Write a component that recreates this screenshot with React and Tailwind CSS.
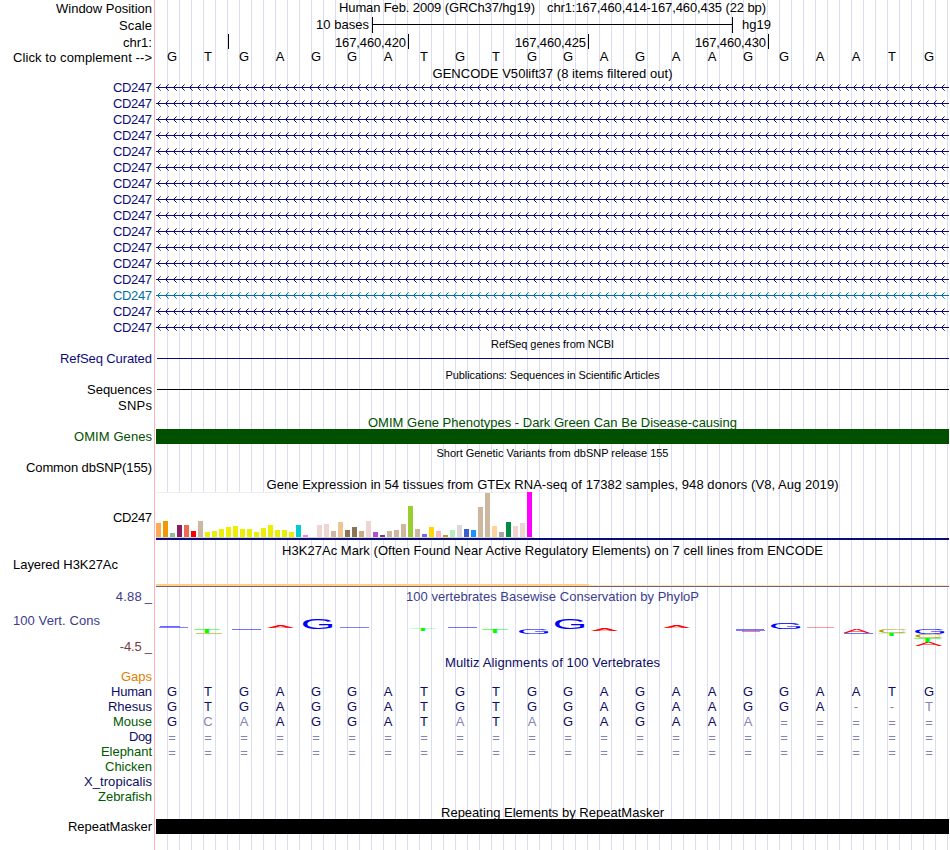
import { useLayoutEffect, useRef, useState } from "react";

const SEQ = "GTGAGGATGTGGAGAAGGAATG";

const TISSUES = [
  ["#ffaa56", 14], ["#ee9a00", 16], ["#8fbc8f", 4], ["#8b1c62", 12], ["#ee6a50", 12], ["#ff0000", 6],
  ["#cdb79e", 16], ["#eeee00", 5], ["#eeee00", 6], ["#eeee00", 8], ["#eeee00", 10], ["#eeee00", 11],
  ["#eeee00", 8], ["#eeee00", 8], ["#eeee00", 5], ["#eeee00", 9], ["#eeee00", 12], ["#eeee00", 7],
  ["#eeee00", 7], ["#eeee00", 5], ["#00cdcd", 12], ["#ee82ee", 2], ["#9ac0cd", 0], ["#eed5d2", 12],
  ["#eed5d2", 13], ["#cdb79e", 6], ["#eec591", 15], ["#8b7355", 7], ["#8b7355", 10], ["#cdaa7d", 6],
  ["#eed5d2", 16], ["#b452cd", 5], ["#7a378b", 2], ["#cdb79e", 6], ["#cdb79e", 7], ["#cdb79e", 13],
  ["#9acd32", 31], ["#cdb79e", 8], ["#7a67ee", 3], ["#ffd700", 10], ["#ffb6c1", 6], ["#cd9b1d", 2],
  ["#b4eeb4", 7], ["#d9d9d9", 12], ["#3a5fcd", 8], ["#1e90ff", 7], ["#cdb79e", 30], ["#cdb79e", 44],
  ["#ffd39b", 11], ["#a6a6a6", 5], ["#008b45", 15], ["#eed5d2", 11], ["#eed5d2", 14], ["#ff00ff", 45],
];

// Conservation logo glyphs: letter, left, right, top, bottom
const LOGO = [
  ["T", 194, 220, 629, 633],
  ["A", 267, 294, 625, 628], ["G", 303, 333, 619, 629],
  ["T", 410, 436, 629, 631], ["T", 482, 508, 629, 633],
  ["G", 519, 549, 629, 634], ["G", 555, 585, 619, 629], ["A", 591, 618, 629, 631],
  ["A", 663, 690, 625, 628], ["G", 771, 801, 622, 629],
  ["A", 843, 870, 629, 633], ["C", 879, 907, 629, 633], ["T", 878, 905, 633, 636],
  ["G", 915, 945, 629, 634], ["C", 915.5, 943, 634, 638], ["T", 914, 941, 638, 642], ["A", 915, 942, 642, 646],
];
// Scores close to zero collapse to hairlines: letter, left, right, top, opacity
const HAIRLINES = [
  ["G", 160, 180, 626, 0.6], ["G", 159, 188, 627, 0.5],
  ["G", 736, 764, 629, 0.55], ["G", 736, 765, 630, 0.5],
  ["C", 196, 222, 633, 0.6], ["G", 232, 261, 629, 0.55], ["G", 340, 369, 627, 0.5], ["G", 448, 477, 627, 0.55],
  ["A", 742, 760, 631, 0.5], ["A", 807, 834, 627, 0.4], ["G", 844, 873, 633, 0.55],
];
const BASE_FILL = { G: "#0000ff", A: "#ff0000", T: "#00ff00", C: "#b4a000" };
const INK = { G: [5, 72.5], A: [0.3, 66.4], T: [2, 59], C: [5, 69] };

const SPECIES = [
  ["Human", 41, "text-[#0c0c64]", SEQ],
  ["Rhesus", 44, "text-[#0c0c64]", "GTGAGGATGTGGAGAAGGA--t"],
  ["Mouse", 39, "text-[#005a00]", "GcaAGGATaTaGAGAAa====="],
  ["Dog", 23, "text-[#0c0c64]", "======================"],
  ["Elephant", 51, "text-[#005a00]", "======================"],
  ["Chicken", 47, "text-[#005a00]", ""],
  ["X_tropicalis", 68, "text-[#0c0c64]", ""],
  ["Zebrafish", 54, "text-[#005a00]", ""],
];

// Text tracked out or in so that it fills the given width
function Fit({ w, className = "", children }) {
  const ref = useRef(null);
  const [ls, setLs] = useState(0);
  useLayoutEffect(() => {
    const el = ref.current;
    el.style.letterSpacing = "0px";
    el.style.marginRight = "0px";
    const next = (w - el.getBoundingClientRect().width) / Math.max(1, children.length - 1);
    el.style.letterSpacing = next + "px";
    el.style.marginRight = -next + "px";
    setLs(next);
  }, [w, children]);
  return (
    <span ref={ref} className={`inline-block whitespace-pre ${className}`} style={{ letterSpacing: ls, marginRight: -ls }}>
      {children}
    </span>
  );
}

function Row({ h, label, w, labelClass = "", children }) {
  return (
    <div className={`flex shrink-0 ${h}`}>
      <div className={`flex w-[152px] shrink-0 items-start justify-end ${labelClass}`}>
        {label && <Fit w={w}>{label}</Fit>}
      </div>
      <div className="ml-1 w-[793px] shrink-0">{children}</div>
    </div>
  );
}

function Title({ h, w, className = "", children }) {
  return (
    <Row h={h}>
      <div className={`flex justify-center ${className}`}>
        <Fit w={w}>{children}</Fit>
      </div>
    </Row>
  );
}

function Intron({ color }) {
  const tips = Array.from({ length: 99 }, (_, i) => 1 + i * 8);
  return (
    <svg width="793" height="16" className="block" shapeRendering="crispEdges" fill={color}>
      <rect x="0" y="7" width="793" height="1" />
      {tips.map((x) => (
        <g key={x}>
          <rect x={x + 1} y="6" width="1" height="3" />
          <rect x={x + 2} y="5" width="1" height="1" />
          <rect x={x + 2} y="9" width="1" height="1" />
          <rect x={x + 3} y="4" width="1" height="1" opacity="0.6" />
          <rect x={x + 3} y="10" width="1" height="1" opacity="0.6" />
        </g>
      ))}
    </svg>
  );
}

function Bases({ seq, className = "" }) {
  return (
    <div className={`-ml-[2px] flex ${className}`}>
      {seq.split("").map((c, i) => {
        const pale = c === "=" || c === "-" || c !== c.toUpperCase();
        return (
          <span
            key={i}
            className={`w-9 shrink-0 text-center ${pale ? "text-[#8484b4]" : ""} ${c === "=" ? "pt-px" : ""} ${i === 21 ? "pl-[2px]" : ""}`}
          >
            {c.toUpperCase()}
          </span>
        );
      })}
    </div>
  );
}

function Logo() {
  return (
    <svg width="793" height="32" viewBox="156 617 793 32" className="block" fontFamily="Liberation Sans, Arial, sans-serif" fontSize="100">
      {HAIRLINES.map(([c, x0, x1, y, o], i) => (
        <rect key={i} x={x0} y={y} width={x1 - x0} height="1" fill={BASE_FILL[c]} opacity={o} />
      ))}
      {LOGO.map(([c, x0, x1, y0, y1], i) => {
        const [a, b] = INK[c];
        const sx = (x1 - x0) / (b - a);
        const round = c === "G" || c === "C";
        const sy = (y1 - y0) / (round ? 71 : 69);
        return (
          <text key={i} fill={BASE_FILL[c]} transform={`translate(${x0 - a * sx} ${y1 - (round ? sy : 0)}) scale(${sx} ${sy})`}>
            {c}
          </text>
        );
      })}
    </svg>
  );
}

function Position({ first, children }) {
  return (
    <div className={`flex h-[15px] justify-end border-r border-black ${first ? "w-[73px]" : "w-[180px]"}`}>
      {children && <Fit w={71} className="mt-px">{children}</Fit>}
      {children && <span className="w-[2px] shrink-0" />}
    </div>
  );
}

export default function App() {
  return (
    <div className="flex h-[850px] w-[950px] overflow-hidden bg-white font-['Liberation_Sans',Arial,sans-serif] text-[13px] leading-[15px] text-black">
      <div className="flex w-[950px] flex-col bg-[linear-gradient(to_right,transparent_154px,#ffb0b0_154px,#ffb0b0_155px,transparent_155px),repeating-linear-gradient(to_right,transparent_0px,transparent_11px,#dcdcf5_11px,#dcdcf5_12px)] bg-[length:950px_850px,793px_850px] bg-[position:0_0,156px_0] bg-no-repeat">
        <Row h="h-[17px]" label="Window Position" w={96} labelClass="pt-px">
          <div className="flex justify-center gap-3">
            <Fit w={196}>Human Feb. 2009 (GRCh37/hg19)</Fit>
            <Fit w={219}>chr1:167,460,414-167,460,435 (22 bp)</Fit>
          </div>
        </Row>
        <Row h="h-4" label="Scale" w={33} labelClass="pt-px">
          <div className="flex">
            <div className="flex w-[216px] justify-end pr-[3px]">
              <Fit w={53}>10 bases</Fit>
            </div>
            <div className="h-4 w-[361px] border-x border-black">
              <div className="mt-[7px] h-px bg-black" />
            </div>
            <div className="pl-[9px]">
              <Fit w={29}>hg19</Fit>
            </div>
          </div>
        </Row>
        <Row h="h-4" label="chr1:" w={29} labelClass="pt-[2px]">
          <div className="flex pt-px">
            <Position first />
            <Position>167,460,420</Position>
            <Position>167,460,425</Position>
            <Position>167,460,430</Position>
          </div>
        </Row>
        <Row h="h-4" label="Click to complement -->" w={139} labelClass="pt-px">
          <Bases seq={SEQ} />
        </Row>
        <Title h="h-[15px]" w={240} className="pt-px">GENCODE V50lift37 (8 items filtered out)</Title>
        {Array.from({ length: 16 }, (_, i) => (
          <Row key={i} h="h-4" label="CD247" w={39} labelClass={i === 13 ? "text-[#006fa6]" : "text-[#0c0c78]"}>
            <Intron color={i === 13 ? "#006fa6" : "#0c0c78"} />
          </Row>
        ))}
        <Title h="h-[15px]" w={123} className="pt-[2px] text-[11px] leading-3">RefSeq genes from NCBI</Title>
        <Row h="h-4" label="RefSeq Curated" w={92} labelClass="text-[#0c0c78]">
          <div className="ml-px pt-[7px]"><div className="h-px bg-[#0c0c78]" /></div>
        </Row>
        <Title h="h-[15px]" w={214} className="pt-[2px] text-[11px] leading-3">Publications: Sequences in Scientific Articles</Title>
        <Row h="h-4" label="Sequences" w={65}>
          <div className="ml-px pt-[7px]"><div className="h-px bg-black" /></div>
        </Row>
        <Row h="h-4" label="SNPs" w={34} />
        <Title h="h-[15px]" w={369} className="pt-px text-[#005000]">OMIM Gene Phenotypes - Dark Green Can Be Disease-causing</Title>
        <Row h="h-4" label="OMIM Genes" w={78} labelClass="text-[#005000]">
          <div className="h-[15px] bg-[#005000]" />
        </Row>
        <Title h="h-[15px]" w={232} className="pt-[2px] text-[11px] leading-3">Short Genetic Variants from dbSNP release 155</Title>
        <Row h="h-4" label="Common dbSNP(155)" w={126} />
        <Title h="h-4" w={572} className="pt-px">Gene Expression in 54 tissues from GTEx RNA-seq of 17382 samples, 948 donors (V8, Aug 2019)</Title>
        <Row h="h-12" label="CD247" w={39} labelClass="pt-[18px]">
          <div className="flex h-[46px] w-[378px] items-end gap-[2px] border-t border-b border-t-[#eeeeee] border-b-[#d3d3d3] bg-white">
            {TISSUES.map(([c, h], i) => (
              <div key={i} className="w-[5px] shrink-0" style={{ height: h, background: c }} />
            ))}
          </div>
          <div className="h-[2px] bg-[#0c0c78]" />
        </Row>
        <Title h="h-4" w={541} className="pt-[3px]">H3K27Ac Mark (Often Found Near Active Regulatory Elements) on 7 cell lines from ENCODE</Title>
        <Row h="h-[31px]" label="Layered H3K27Ac" w={105} labelClass="pt-px pr-[34px]">
          <div className="flex h-[30px] items-end">
            <div className="h-[2px] w-[433px] bg-[#ffd080]" />
            <div className="h-px w-[360px] bg-[#ffe0b0]" />
          </div>
          <div className="h-px bg-[#786078]" />
        </Row>
        <div className="flex h-[68px] shrink-0">
          <div className="flex w-[152px] shrink-0 flex-col pt-[2px] text-[#3c3c8c]">
            <div className="flex justify-end gap-[3px]"><Fit w={26}>4.88</Fit><span>_</span></div>
            <div className="pt-[9px] pb-[11px] pl-[13px]"><Fit w={87}>100 Vert. Cons</Fit></div>
            <div className="flex justify-end gap-[3px] text-[#783c3c]"><Fit w={22}>-4.5</Fit><span>_</span></div>
          </div>
          <div className="ml-1 flex w-[793px] shrink-0 flex-col gap-[13px] pt-[2px]">
            <div className="flex justify-center text-[#3c3c8c]"><Fit w={293}>100 vertebrates Basewise Conservation by PhyloP</Fit></div>
            <Logo />
          </div>
        </div>
        <Title h="h-[14px]" w={215} className="text-[#0c0c64]">Multiz Alignments of 100 Vertebrates</Title>
        <Row h="h-[15px]" label="Gaps" w={31} labelClass="text-[#e08000]" />
        {SPECIES.map(([name, w, cls, seq]) => (
          <Row key={name} h="h-[15px]" label={name} w={w} labelClass={cls}>
            <Bases seq={seq} className="text-[#0c0c64]" />
          </Row>
        ))}
        <Title h="h-[15px]" w={223} className="pt-px">Repeating Elements by RepeatMasker</Title>
        <Row h="h-[15px]" label="RepeatMasker" w={84}>
          <div className="h-[15px] bg-black" />
        </Row>
      </div>
    </div>
  );
}
